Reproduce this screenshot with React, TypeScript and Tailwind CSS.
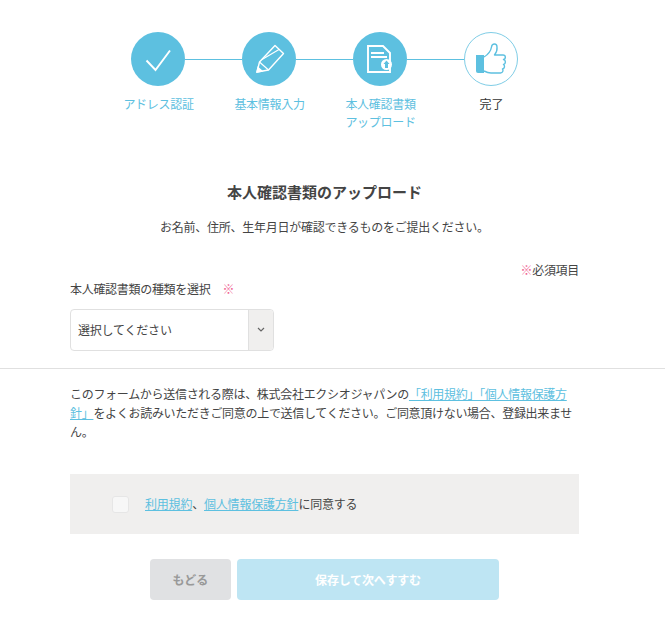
const font = "[font-family:'Noto_Sans_CJK_JP',sans-serif]";

function Check() {
  return (
    <svg width="54" height="54" viewBox="0 0 54 54" fill="none">
      <path d="M15.5 28.5L24.5 38L39 18.5" stroke="#fff" strokeWidth="1.9" />
    </svg>
  );
}

function Pencil() {
  return (
    <svg width="54" height="54" viewBox="0 0 54 54" fill="none" stroke="#fff" strokeWidth="1.4">
      <path d="M15 40L17.5 30L33 13.5L41.5 21.5L26.5 38Z" strokeLinejoin="round" />
      <path d="M17.5 30L26.5 38M20 27.5L37 17.5" strokeWidth="1.2" />
      <path d="M15 40L16 35.5L20 39Z" fill="#fff" />
    </svg>
  );
}

function Doc() {
  return (
    <svg width="54" height="54" viewBox="0 0 54 54" fill="none">
      <path d="M15 14H30L37 21V40H15Z" stroke="#fff" strokeWidth="1.9" />
      <path d="M18 20H31V22H18ZM18 24H34V26H18Z" fill="#fff" />
      <circle cx="33.5" cy="32.5" r="5.5" fill="#fff" />
      <path d="M33.5 28.5L36.5 32H35V36H32V32H30.5Z" fill="#5dc0e0" />
    </svg>
  );
}

function Thumb() {
  return (
    <svg width="52" height="52" viewBox="0 0 52 52" fill="none">
      <path d="M11 22H19V40H13Q11 40 11 38Z" fill="#5dc0e0" />
      <path
        d="M19 24C24 21 26 17 26.5 14C27 10 32 10 32 14C32.5 17 31 20 29.5 22H38C41 22 41 26 38.5 26.5C41 27 41 31 38.5 31.5C40 32.5 40 35.5 37.5 36C38.5 37 38 40 35.5 40H26C23 40 21 39 19 38"
        stroke="#5dc0e0"
        strokeWidth="1.4"
        strokeLinejoin="round"
      />
    </svg>
  );
}

const steps = [
  { label: ["アドレス認証"], icon: <Check />, done: true },
  { label: ["基本情報入力"], icon: <Pencil />, done: true },
  { label: ["本人確認書類", "アップロード"], icon: <Doc />, done: true },
  { label: ["完了"], icon: <Thumb />, done: false },
];

export default function App() {
  return (
    <div className={`${font} w-[665px] h-[631px] bg-white text-[12px] text-[#444] overflow-hidden`}>
      <div className="flex pl-[102px] pt-[32px]">
        {steps.map((step, i) => (
          <div key={i} className="relative w-[111px]">
            {i < 3 && <div className="absolute left-[83px] top-[27px] w-[57px] h-px bg-[#5dc0e0]" />}
            <div
              className={
                step.done
                  ? "relative ml-[29px] w-[54px] h-[54px] rounded-full bg-[#5dc0e0]"
                  : "relative ml-[29px] w-[54px] h-[54px] rounded-full bg-white border border-[#7fcde6]"
              }
            >
              {step.icon}
            </div>
            <div
              className={
                step.done
                  ? "mt-[9px] pl-[2px] text-center leading-[18px] tracking-[-0.3px] text-[#5dc0e0]"
                  : "mt-[9px] pl-[2px] text-center leading-[18px] text-[#333]"
              }
            >
              {step.label.map((l) => (
                <div key={l}>{l}</div>
              ))}
            </div>
          </div>
        ))}
      </div>

      <div className="w-[649px]">
        <h1 className="mt-[50px] text-center text-[15px] leading-[22px] font-bold text-[#444]">
          本人確認書類のアップロード
        </h1>
        <p className="mt-[14px] text-center leading-[20px] tracking-[-0.25px]">
          お名前、住所、生年月日が確認できるものをご提出ください。
        </p>

        <div className="mx-[70px] mt-[24px]">
          <p className="text-right leading-[18px] tracking-[-0.3px]">
            <span className="text-[#f06292]">※</span>必須項目
          </p>
          <label className="block leading-[18px] tracking-[-0.3px] mt-[1px]">
            本人確認書類の種類を選択<span className="ml-[12px] text-[#f06292]">※</span>
          </label>
          <div className="mt-[11px] flex w-[204px] h-[42px] rounded border border-[#e0e0e0]">
            <div className="flex-1 pl-[7px] flex items-center tracking-[-0.2px]">選択してください</div>
            <div className="w-[25px] flex items-center justify-center bg-[#f0efee] border-l border-[#e0e0e0] rounded-r">
              <svg width="8" height="6" viewBox="0 0 8 6" fill="none">
                <path d="M1 1L4 4L7 1" stroke="#666" strokeWidth="1.2" />
              </svg>
            </div>
          </div>
        </div>
      </div>

      <div className="mt-[17px] h-px bg-[#e0e0e0]" />

      <div className="w-[649px]">
        <p className="mx-[70px] mt-[15px] leading-[19px] tracking-[-0.3px]">
          このフォームから送信される際は、株式会社エクシオジャパンの
          <a className="text-[#5dc0e0] underline">「利用規約」「個人情報保護方針」</a>
          をよくお読みいただきご同意の上で送信してください。ご同意頂けない場合、登録出来ません。
        </p>

        <div className="mx-[70px] mt-[33px] h-[60px] bg-[#f0efee] flex items-center pl-[42px]">
          <div className="w-[17px] h-[17px] rounded-[3px] bg-[#f7f7f7] border border-[#e6e6e6]" />
          <p className="ml-[16px] tracking-[-0.2px]">
            <a className="text-[#5dc0e0] underline">利用規約</a>、
            <a className="text-[#5dc0e0] underline">個人情報保護方針</a>に同意する
          </p>
        </div>

        <div className="mt-[25px] flex justify-center gap-[6px]">
          <button className="w-[81px] h-[41px] rounded bg-[#e0e1e3] text-[#999] text-[12px] font-bold">もどる</button>
          <button className="w-[262px] h-[41px] rounded bg-[#bee5f3] text-white text-[12px] tracking-[-0.2px] font-bold">
            保存して次へすすむ
          </button>
        </div>
      </div>
    </div>
  );
}
